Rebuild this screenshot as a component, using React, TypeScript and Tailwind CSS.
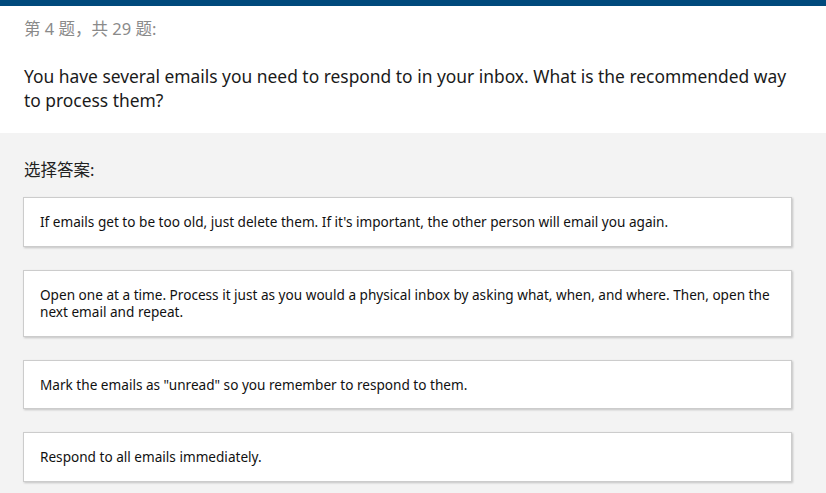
export default function App() {
	const answers = [
		"If emails get to be too old, just delete them. If it's important, the other person will email you again.",
		"Open one at a time. Process it just as you would a physical inbox by asking what, when, and where. Then, open the next email and repeat.",
		'Mark the emails as "unread" so you remember to respond to them.',
		"Respond to all emails immediately.",
	];

	return (
		<main className="min-h-screen bg-[#f3f3f3] font-['Noto_Sans','Noto_Sans_CJK_SC',sans-serif] text-[#1a1a1a]">
			<div className="h-[6px] bg-[#004a7c] shadow-[0_1px_3px_rgba(0,0,0,0.25)]" />
			<section className="bg-white px-6 pb-[21px] pt-[11px]">
				<p className="text-[16.5px] leading-[24px] text-[#8a8a8a]">
					第 4 题，共 29 题:
				</p>
				<h1 className="mt-[23px] text-[17.4px] leading-[24px] text-[#1a1a1a]">
					You have several emails you need to respond to in your inbox. What is
					the recommended way to process them?
				</h1>
			</section>
			<section className="px-6 pt-[25px]">
				<p className="text-[16.5px] leading-[24px] text-[#222]">选择答案:</p>
				<div className="-ml-px mt-[15px] flex flex-col gap-[23px] pr-[10px]">
					{answers.map((a) => (
						<div
							key={a}
							className="border border-[#cccccc] bg-white px-4 py-[15px] text-[13.6px] leading-[17.5px] text-[#111] shadow-[1px_1px_2px_rgba(0,0,0,0.2)]"
						>
							{a}
						</div>
					))}
				</div>
			</section>
		</main>
	);
}
